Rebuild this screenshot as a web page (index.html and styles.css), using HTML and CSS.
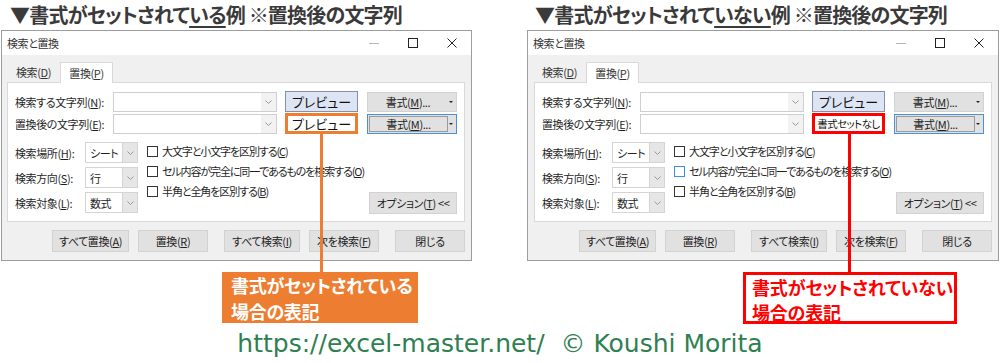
FILE: index.html
```html
<!DOCTYPE html>
<html lang="ja">
<head>
<meta charset="utf-8">
<title>検索と置換</title>
<link rel="stylesheet" href="styles.css">
</head>
<body>
<div class="page">
  <section class="col col-left">
    <h2 class="heading">▼書式がセットされて<u>いる</u>例 ※置換後の文字列</h2>
    <div class="dialog">
      <div class="titlebar">
        <span class="title">検索と置換</span>
        <div class="winbtns">
          <span class="wb wb-min"><svg width="10" height="10" viewBox="0 0 10 10"><path d="M0 5.5h10" stroke="#b5b5b5" stroke-width="1"/></svg></span>
          <span class="wb"><svg width="10" height="10" viewBox="0 0 10 10"><rect x="0.5" y="0.5" width="9" height="9" fill="none" stroke="#222" stroke-width="1"/></svg></span>
          <span class="wb"><svg width="10" height="10" viewBox="0 0 10 10"><path d="M0.5 0.5l9 9M9.5 0.5l-9 9" stroke="#222" stroke-width="1"/></svg></span>
        </div>
      </div>
      <div class="tabs">
        <span class="tab">検索(<u>D</u>)</span>
        <span class="tab tab-active">置換(<u>P</u>)</span>
      </div>
      <div class="panel">
        <div class="row">
          <span class="label">検索する文字列(<u>N</u>):</span>
          <span class="textbox"><span class="tb-field"></span><span class="tb-drop"><svg width="7" height="4" viewBox="0 0 7 4"><path d="M0.5 0.5l3 3 3-3" fill="none" stroke="#999" stroke-width="1"/></svg></span></span>
          <span class="btn btn-preview">プレビュー</span>
          <span class="btn btn-format"><span class="fmt-text">書式(<u>M</u>)...</span><span class="fmt-arrow"></span></span>
        </div>
        <div class="row row-2">
          <span class="label">置換後の文字列(<u>E</u>):</span>
          <span class="textbox"><span class="tb-field"></span><span class="tb-drop"><svg width="7" height="4" viewBox="0 0 7 4"><path d="M0.5 0.5l3 3 3-3" fill="none" stroke="#999" stroke-width="1"/></svg></span></span>
          <span class="mark mark-orange">プレビュー</span>
          <span class="btn btn-format btn-focus"><span class="fmt-face">書式(<u>M</u>)...</span><span class="fmt-arrow"></span></span>
        </div>
        <div class="opts">
          <div class="combos">
            <div class="crow"><span class="clabel">検索場所(<u>H</u>):</span><span class="combo"><span class="cval">シート</span><span class="cdrop"><svg width="7" height="4" viewBox="0 0 7 4"><path d="M0.5 0.5l3 3 3-3" fill="none" stroke="#999" stroke-width="1"/></svg></span></span></div>
            <div class="crow"><span class="clabel">検索方向(<u>S</u>):</span><span class="combo"><span class="cval">行</span><span class="cdrop"><svg width="7" height="4" viewBox="0 0 7 4"><path d="M0.5 0.5l3 3 3-3" fill="none" stroke="#999" stroke-width="1"/></svg></span></span></div>
            <div class="crow"><span class="clabel">検索対象(<u>L</u>):</span><span class="combo"><span class="cval">数式</span><span class="cdrop"><svg width="7" height="4" viewBox="0 0 7 4"><path d="M0.5 0.5l3 3 3-3" fill="none" stroke="#999" stroke-width="1"/></svg></span></span></div>
          </div>
          <div class="checks">
            <div class="chk"><span class="box"></span><span>大文字と小文字を区別する(<u>C</u>)</span></div>
            <div class="chk"><span class="box"></span><span>セル内容が完全に同一であるものを検索する(<u>O</u>)</span></div>
            <div class="chk"><span class="box"></span><span>半角と全角を区別する(<u>B</u>)</span></div>
          </div>
          <span class="btn btn-options">オプション(<u>T</u>) &lt;&lt;</span>
        </div>
      </div>
      <div class="actions">
        <span class="btn act a1">すべて置換(<u>A</u>)</span>
        <span class="btn act a2">置換(<u>R</u>)</span>
        <span class="btn act a3">すべて検索(<u>I</u>)</span>
        <span class="btn act a4">次を検索(<u>F</u>)</span>
        <span class="btn act a5">閉じる</span>
      </div>
    </div>
    <div class="callout callout-orange"><span class="cl-line">書式がセットされている</span><span class="cl-line">場合の表記</span></div>
    <span class="connector connector-orange"></span>
  </section>

  <section class="col col-right">
    <h2 class="heading">▼書式がセットされて<u>いない</u>例 ※置換後の文字列</h2>
    <div class="dialog">
      <div class="titlebar">
        <span class="title">検索と置換</span>
        <div class="winbtns">
          <span class="wb wb-min"><svg width="10" height="10" viewBox="0 0 10 10"><path d="M0 5.5h10" stroke="#b5b5b5" stroke-width="1"/></svg></span>
          <span class="wb"><svg width="10" height="10" viewBox="0 0 10 10"><rect x="0.5" y="0.5" width="9" height="9" fill="none" stroke="#222" stroke-width="1"/></svg></span>
          <span class="wb"><svg width="10" height="10" viewBox="0 0 10 10"><path d="M0.5 0.5l9 9M9.5 0.5l-9 9" stroke="#222" stroke-width="1"/></svg></span>
        </div>
      </div>
      <div class="tabs">
        <span class="tab">検索(<u>D</u>)</span>
        <span class="tab tab-active">置換(<u>P</u>)</span>
      </div>
      <div class="panel">
        <div class="row">
          <span class="label">検索する文字列(<u>N</u>):</span>
          <span class="textbox"><span class="tb-field"></span><span class="tb-drop"><svg width="7" height="4" viewBox="0 0 7 4"><path d="M0.5 0.5l3 3 3-3" fill="none" stroke="#999" stroke-width="1"/></svg></span></span>
          <span class="btn btn-preview">プレビュー</span>
          <span class="btn btn-format"><span class="fmt-text">書式(<u>M</u>)...</span><span class="fmt-arrow"></span></span>
        </div>
        <div class="row row-2">
          <span class="label">置換後の文字列(<u>E</u>):</span>
          <span class="textbox"><span class="tb-field"></span><span class="tb-drop"><svg width="7" height="4" viewBox="0 0 7 4"><path d="M0.5 0.5l3 3 3-3" fill="none" stroke="#999" stroke-width="1"/></svg></span></span>
          <span class="mark mark-red">書式セットなし</span>
          <span class="btn btn-format btn-focus"><span class="fmt-face">書式(<u>M</u>)...</span><span class="fmt-arrow"></span></span>
        </div>
        <div class="opts">
          <div class="combos">
            <div class="crow"><span class="clabel">検索場所(<u>H</u>):</span><span class="combo"><span class="cval">シート</span><span class="cdrop"><svg width="7" height="4" viewBox="0 0 7 4"><path d="M0.5 0.5l3 3 3-3" fill="none" stroke="#999" stroke-width="1"/></svg></span></span></div>
            <div class="crow"><span class="clabel">検索方向(<u>S</u>):</span><span class="combo"><span class="cval">行</span><span class="cdrop"><svg width="7" height="4" viewBox="0 0 7 4"><path d="M0.5 0.5l3 3 3-3" fill="none" stroke="#999" stroke-width="1"/></svg></span></span></div>
            <div class="crow"><span class="clabel">検索対象(<u>L</u>):</span><span class="combo"><span class="cval">数式</span><span class="cdrop"><svg width="7" height="4" viewBox="0 0 7 4"><path d="M0.5 0.5l3 3 3-3" fill="none" stroke="#999" stroke-width="1"/></svg></span></span></div>
          </div>
          <div class="checks">
            <div class="chk"><span class="box"></span><span>大文字と小文字を区別する(<u>C</u>)</span></div>
            <div class="chk"><span class="box box-hover"></span><span>セル内容が完全に同一であるものを検索する(<u>O</u>)</span></div>
            <div class="chk"><span class="box"></span><span>半角と全角を区別する(<u>B</u>)</span></div>
          </div>
          <span class="btn btn-options">オプション(<u>T</u>) &lt;&lt;</span>
        </div>
      </div>
      <div class="actions">
        <span class="btn act a1">すべて置換(<u>A</u>)</span>
        <span class="btn act a2">置換(<u>R</u>)</span>
        <span class="btn act a3">すべて検索(<u>I</u>)</span>
        <span class="btn act a4">次を検索(<u>F</u>)</span>
        <span class="btn act a5">閉じる</span>
      </div>
    </div>
    <div class="callout callout-red"><span class="cl-line">書式がセットされていない</span><span class="cl-line">場合の表記</span></div>
    <span class="connector connector-red"></span>
  </section>
</div>
<footer class="credit">https://excel-master.net/&nbsp; © Koushi Morita</footer>
</body>
</html>
```

FILE: styles.css
```css
html, body {
  margin: 0;
  padding: 0;
  background: #ffffff;
}
body {
  width: 1000px;
  height: 363px;
  overflow: hidden;
  font-family: "Noto Sans CJK JP", "Noto Sans", sans-serif;
  color: #222;
}
u { text-decoration: underline; text-underline-offset: 1px; }

.page {
  display: flex;
}
.col {
  position: relative;
  display: flex;
  flex-direction: column;
}
.col-left { width: 526px; }
.col-right { width: 474px; }

.heading {
  margin: 0;
  height: 30px;
  line-height: 30px;
  padding-left: 10px;
  font-size: 20px;
  font-weight: 700;
  color: #3a3a3a;
  font-feature-settings: "palt";
  white-space: nowrap;
  letter-spacing: -0.8px;
}
.col-right .heading { padding-left: 9px; }
.heading u { text-underline-offset: 3px; text-decoration-thickness: 2px; }

.dialog {
  margin-left: 1px;
  width: 471px;
  height: 231px;
  box-sizing: border-box;
  border: 1px solid #9c9c9c;
  background: #f0f0f0;
  font-size: 11px;
  letter-spacing: -0.4px;
  font-feature-settings: "palt";
  color: #1f1f1f;
  display: flex;
  flex-direction: column;
}
.col-right .dialog { width: 472px; }

.titlebar {
  height: 24px;
  background: #ffffff;
  display: flex;
  align-items: center;
  padding-left: 5px;
}
.title { font-size: 11px; color: #333; }
.winbtns { margin-left: auto; display: flex; height: 24px; }
.wb {
  width: 39px;
  display: flex;
  align-items: center;
  justify-content: center;
}

.tabs {
  display: flex;
  padding: 7px 0 0 5px;
  height: 20px;
}
.tab {
  width: 53px;
  height: 20px;
  box-sizing: border-box;
  display: flex;
  align-items: center;
  justify-content: center;
  color: #333;
}
.tab-active {
  background: #fff;
  border: 1px solid #d9d9d9;
  border-bottom: none;
  height: 21px;
  position: relative;
  z-index: 1;
}

.panel {
  margin: 0 6px 0 5px;
  background: #fff;
  border: 1px solid #d9d9d9;
  padding: 8px 7px 8px 7px;
}
.col-right .panel { margin-right: 6px; margin-left: 6px; }

.row {
  display: flex;
  align-items: center;
  height: 21px;
}
.row-2 { margin-top: 1px; }
.label { width: 98px; white-space: nowrap; flex-shrink: 0; }
.textbox {
  width: 164px;
  height: 20px;
  box-sizing: border-box;
  border: 1px solid #cfcfcf;
  background: #fff;
  display: flex;
  flex-shrink: 0;
}
.tb-field { flex: 1; }
.tb-drop {
  width: 15px;
  background: #f2f2f2;
  display: flex;
  align-items: center;
  justify-content: center;
}

.btn {
  box-sizing: border-box;
  background: #e1e1e1;
  border: 1px solid #d2d2d2;
  display: flex;
  align-items: center;
  justify-content: center;
  white-space: nowrap;
  color: #222;
  flex-shrink: 0;
}
.btn-preview {
  margin-left: 8px;
  width: 73px;
  height: 21px;
  background: #dde4f4;
  border: 1px solid #8290ad;
  font-size: 13px;
  letter-spacing: 0;
  color: #111;
}
.btn-format {
  margin-left: 9px;
  width: 90px;
  height: 20px;
  position: relative;
  justify-content: flex-start;
}
.fmt-text { width: 80px; text-align: center; }
.fmt-arrow {
  position: absolute;
  right: 3px;
  top: 8px;
  width: 0;
  height: 0;
  border-left: 2px solid transparent;
  border-right: 2px solid transparent;
  border-top: 2px solid #222;
}
.btn-focus {
  border: 1px solid #4a90d9;
  padding: 1px;
}
.fmt-face {
  width: 79px;
  height: 16px;
  border: 1px solid #9a9a9a;
  background: #e1e1e1;
  display: flex;
  align-items: center;
  justify-content: center;
  box-sizing: border-box;
}

.mark {
  margin-left: 8px;
  width: 73px;
  height: 21px;
  box-sizing: border-box;
  background: #fff;
  display: flex;
  align-items: center;
  justify-content: center;
  white-space: nowrap;
  color: #111;
  flex-shrink: 0;
}
.mark-orange { border: 3px solid #ed7d31; font-size: 13px; letter-spacing: 0; }
.mark-red { border: 3px solid #ff0000; font-size: 10.5px; letter-spacing: -0.6px; }

.opts {
  display: flex;
  margin-top: 8px;
}
.combos {
  display: flex;
  flex-direction: column;
  gap: 4px;
  flex-shrink: 0;
}
.crow {
  display: flex;
  align-items: center;
  height: 21px;
}
.clabel { width: 70px; white-space: nowrap; }
.combo {
  width: 53px;
  height: 21px;
  box-sizing: border-box;
  border: 1px solid #d4d4d4;
  display: flex;
  background: #fff;
}
.cval {
  flex: 1;
  padding-left: 4px;
  display: flex;
  align-items: center;
  font-size: 11px;
  white-space: nowrap;
  overflow: hidden;
}
.cdrop {
  width: 14px;
  background: #e6e6e6;
  border-left: 1px solid #d4d4d4;
  display: flex;
  align-items: center;
  justify-content: center;
  flex-shrink: 0;
}

.checks {
  margin-left: 9px;
  padding-top: 3px;
  display: flex;
  flex-direction: column;
  gap: 8px;
  letter-spacing: -1.1px;
}
.chk {
  display: flex;
  align-items: center;
  height: 12px;
  gap: 4px;
  white-space: nowrap;
}
.box {
  width: 11px;
  height: 11px;
  box-sizing: border-box;
  border: 1px solid #333;
  background: #fff;
  flex-shrink: 0;
}
.box-hover { border-color: #3c8ee6; }

.btn-options {
  margin-left: auto;
  align-self: flex-end;
  width: 88px;
  height: 22px;
  margin-bottom: -1px;
}

.actions {
  display: flex;
  justify-content: flex-end;
  padding: 8px 6px 0 0;
}
.act { height: 22px; }
.a1 { width: 77px; }
.a2 { width: 70px; margin-left: 9px; }
.a3 { width: 76px; margin-left: 16px; }
.a4 { width: 70px; margin-left: 9px; }
.a5 { width: 70px; margin-left: 16px; }

.callout {
  margin-top: 11px;
  height: 51px;
  box-sizing: border-box;
  font-size: 18px;
  font-weight: 700;
  font-feature-settings: "palt";
  white-space: nowrap;
  padding: 0 0 0 9px;
  letter-spacing: -0.3px;
  display: flex;
  flex-direction: column;
}
.cl-line {
  display: block;
  height: 26px;
  line-height: 26px;
}
.callout-orange {
  margin-left: 222px;
  width: 196px;
  background: #ed7d31;
  color: #fff;
}
.callout-red {
  margin-left: 217px;
  width: 214px;
  height: 52px;
  background: #fff;
  border: 3px solid #ff0000;
  color: #ff0000;
  padding: 0 0 0 6px;
  letter-spacing: -0.2px;
}
.callout-red .cl-line { height: 25px; line-height: 25px; }

.connector {
  position: absolute;
  top: 134px;
  width: 3px;
  height: 138px;
}
.connector-orange { left: 320px; background: #ed7d31; }
.connector-red { left: 322px; background: #ff0000; }

.credit {
  margin-top: 5px;
  height: 30px;
  line-height: 30px;
  text-align: center;
  font-family: "DejaVu Sans", sans-serif;
  font-size: 25px;
  color: #2f8050;
  white-space: nowrap;
}
```
